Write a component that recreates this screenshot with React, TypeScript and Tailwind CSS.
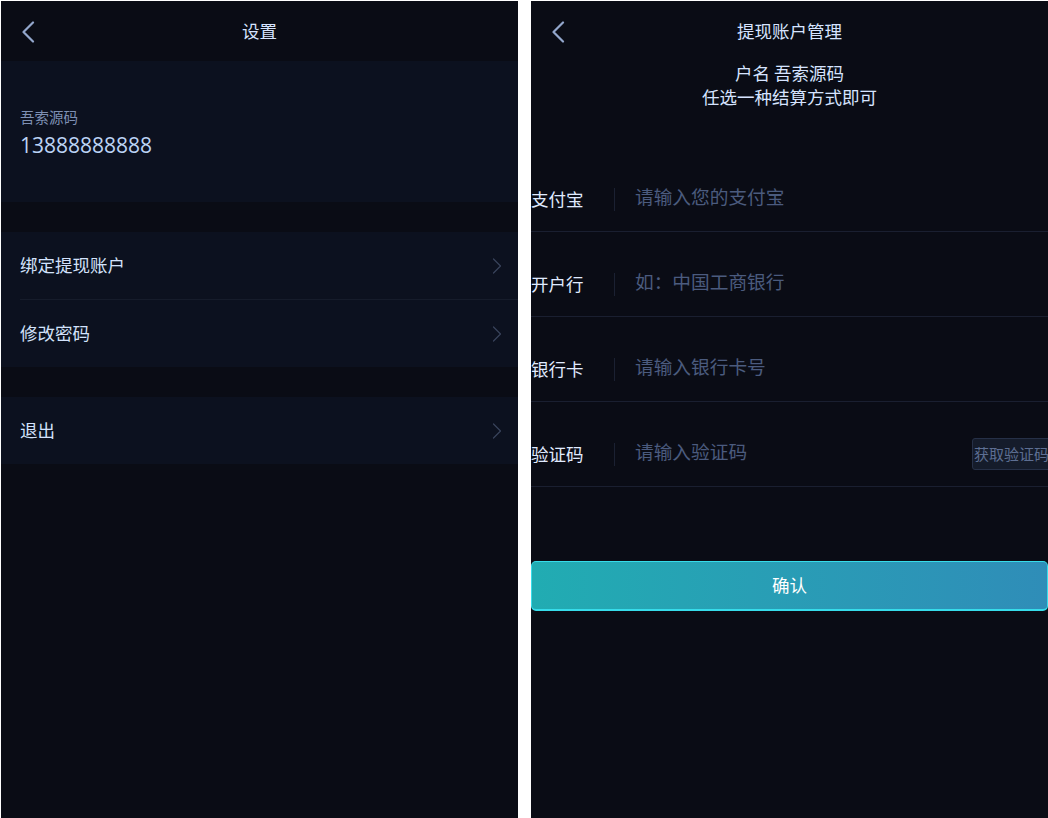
import type { ReactNode } from 'react'

const CJK = "font-['Noto_Sans_CJK_SC',sans-serif]"

function BackIcon() {
  return (
    <svg width="14" height="22" viewBox="0 0 14 22" fill="none">
      <path d="M12 1.5 L2.5 11 L12 20.5" stroke="#93a7cc" strokeWidth="2.2" strokeLinecap="round" strokeLinejoin="round" />
    </svg>
  )
}

function ChevronRight() {
  return (
    <svg width="10" height="16" viewBox="0 0 10 16" fill="none">
      <path d="M1.5 1 L8.5 8 L1.5 15" stroke="#39445c" strokeWidth="1.2" strokeLinecap="round" strokeLinejoin="round" />
    </svg>
  )
}

function Header({ title }: { title: string }) {
  return (
    <div className="grid h-[60px] grid-cols-[60px_1fr_60px] items-center bg-[#0a0c15]">
      <div className="pl-[20px] pt-[1px]">
        <BackIcon />
      </div>
      <div className="text-center text-[17.5px] leading-6 text-[#d6e4ff]">{title}</div>
      <div />
    </div>
  )
}

function MenuRow({ label, divider = false }: { label: string; divider?: boolean }) {
  return (
    <div className={divider ? 'ml-[19px] border-b border-[#161c2b]' : 'pl-[19px]'}>
      <div className="flex h-[67px] items-center justify-between pr-[16px]">
        <span className="text-[17.5px] text-[#d3e2fb]">{label}</span>
        <ChevronRight />
      </div>
    </div>
  )
}

function FormRow({ label, placeholder, extra }: { label: string; placeholder: string; extra?: ReactNode }) {
  return (
    <div className="border-b border-[#1a1f30] pb-[12px] pt-[32px]">
      <div className="flex h-[40px] items-center">
        <span className="w-[83px] shrink-0 text-[17.5px] text-[#e0ebff]">{label}</span>
        <span className="h-[23px] w-px shrink-0 bg-[#1b2132]" />
        <input
          readOnly
          placeholder={placeholder}
          className={`min-w-0 flex-1 bg-transparent pb-[6px] pl-[20px] text-[18.7px] outline-none placeholder:text-[#4b5b7e] ${CJK}`}
        />
        {extra}
      </div>
    </div>
  )
}

export default function App() {
  return (
    <div className={`flex min-h-[818px] gap-[13px] bg-white pl-[1px] pt-[1px] ${CJK}`}>
      <div className="h-[817px] w-[517px] bg-[#0a0c15]">
        <Header title="设置" />
        <div className="h-[141px] bg-[#0c111f] px-[19px] pt-[46px]">
          <div className="text-[14.5px] leading-5 text-[#7e90b4]">吾索源码</div>
          <div className="mt-[4px] font-['Open_Sans',sans-serif] text-[21px] leading-7 text-[#bcd4f6]">13888888888</div>
        </div>
        <div className="mt-[30px] bg-[#0c111f]">
          <MenuRow label="绑定提现账户" divider />
          <MenuRow label="修改密码" />
        </div>
        <div className="mt-[30px] bg-[#0c111f]">
          <MenuRow label="退出" />
        </div>
      </div>

      <div className="h-[817px] w-[517px] overflow-hidden bg-[#0a0c15]">
        <Header title="提现账户管理" />
        <div className="text-center text-[17.5px] leading-6 text-[#d6e4ff]">
          <div>户名 吾索源码</div>
          <div>任选一种结算方式即可</div>
        </div>
        <div className="mt-[38px]">
          <FormRow label="支付宝" placeholder="请输入您的支付宝" />
          <FormRow label="开户行" placeholder="如：中国工商银行" />
          <FormRow label="银行卡" placeholder="请输入银行卡号" />
          <FormRow
            label="验证码"
            placeholder="请输入验证码"
            extra={
              <button className="-mr-[3px] h-[32px] w-[79px] shrink-0 whitespace-nowrap rounded-[3px] border border-[#263047] bg-[#151c2b] p-0 text-left pl-[1px] text-[15px] text-[#5d6e92]">
                获取验证码
              </button>
            }
          />
        </div>
        <button className="mt-[74px] h-[50px] w-full rounded-[5px] border border-b-2 border-[#37dcea] bg-gradient-to-r from-[#21acb2] to-[#2f8db8] text-[17.5px] text-white">
          确认
        </button>
      </div>
    </div>
  )
}
